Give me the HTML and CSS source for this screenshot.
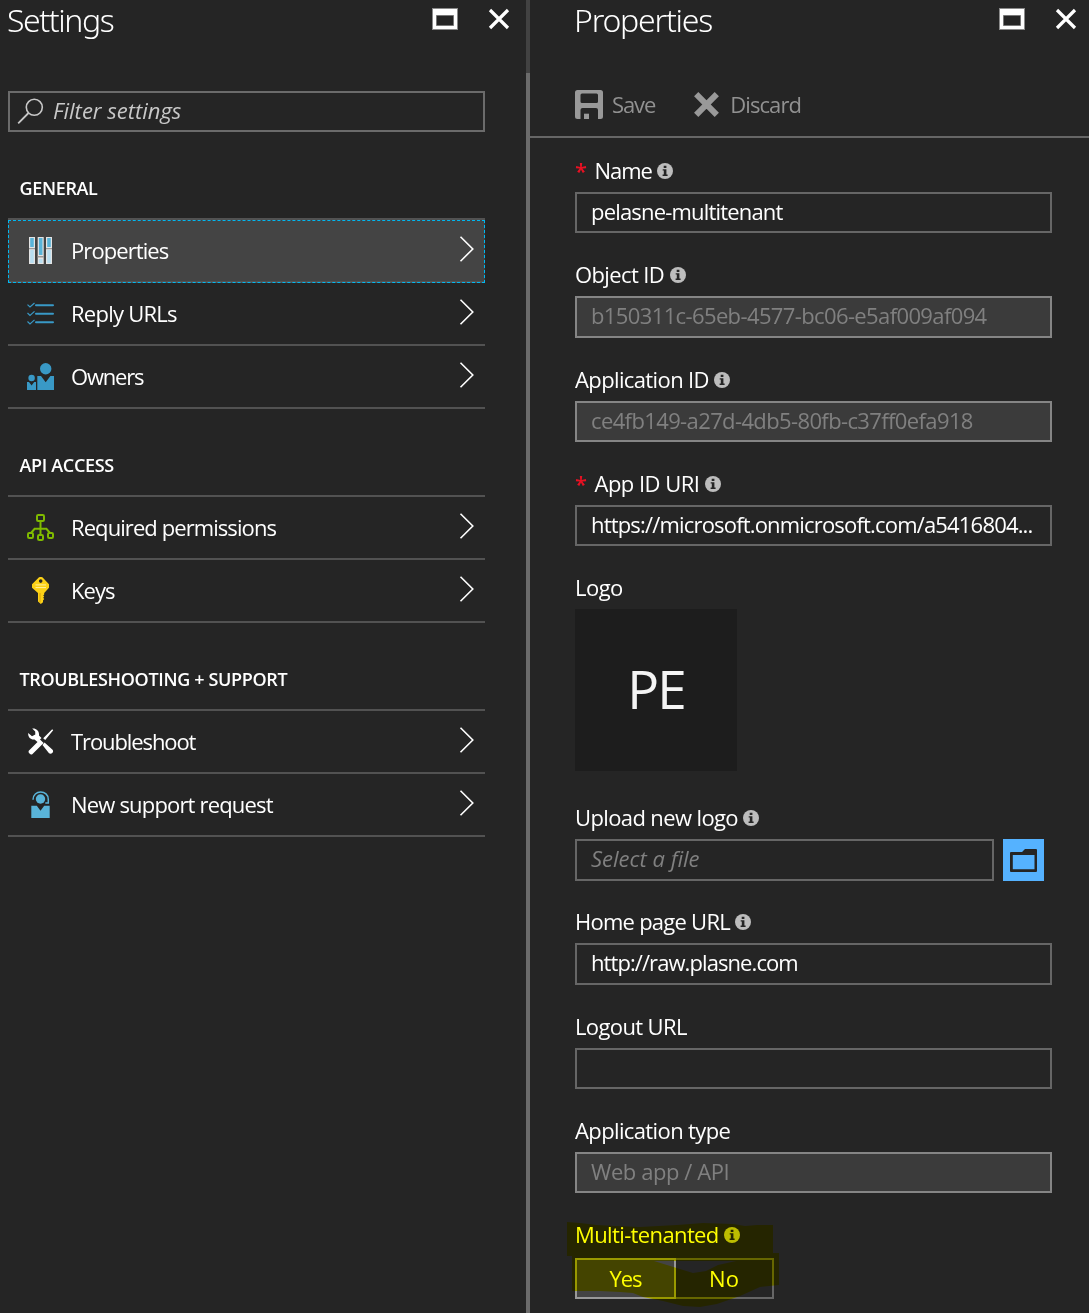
FILE: index.html
```html
<!DOCTYPE html>
<html lang="en">
<head>
<meta charset="utf-8">
<title>Settings - Properties</title>
<link rel="stylesheet" href="styles.css">
</head>
<body>
<svg class="defs" aria-hidden="true">
  <symbol id="window" viewBox="0 0 26 22"><path fill="#8a8a8a" d="M0 0h26v22H0z"/><path fill="#fff" d="M1 1h24v20H1z"/><path fill="#252525" stroke="#777" stroke-width="1" d="M4.500 7.500h17v10h-17z"/></symbol>
  <symbol id="close" viewBox="0 0 22 22"><path d="M2 2l18 18M20 2L2 20" stroke="#fff" stroke-width="3.200"/></symbol>
  <symbol id="chevron" viewBox="0 0 16 28"><path d="M1.500 1.800L13.800 14L1.500 26.200" fill="none" stroke="#fff" stroke-width="1.600"/></symbol>
  <symbol id="info" viewBox="0 0 16 16"><circle cx="8" cy="8" r="8" fill="#bdbdbd"/><path fill="#252525" d="M6.700 2.800h2.700v2.300H6.700zM5.700 6.300h3.700v5.300h1.200v1.300H5.600v-1.300h1.200V7.600H5.700z"/></symbol>
</svg>
<main class="blades">
  <section class="blade settings">
    <header class="blade-head">
      <h1 class="title title-settings">Settings</h1>
      <div class="controls"><svg class="i-window"><use href="#window"/></svg><svg class="i-close"><use href="#close"/></svg></div>
    </header>
    <div class="filter">
      <svg class="i-search" viewBox="0 0 27 27"><circle cx="17.300" cy="9.300" r="8" fill="none" stroke="#c8c8c8" stroke-width="1.600"/><path d="M11.500 15L1.200 25.300" stroke="#c8c8c8" stroke-width="1.800"/></svg>
      <span>Filter settings</span>
    </div>

    <h2 class="group">GENERAL</h2>
    <ul class="menu">
      <li class="item selected">
        <svg class="i-item" viewBox="0 0 27 27"><path fill="#e4e4e4" d="M2 0h6v27H2zM10.700 0h6v27h-6zM19 0h6v27h-6z"/><path fill="#59b4d9" d="M3.200 1h3.600v9H3.200zM11.900 1h3.600v17h-3.600zM20.200 1h3.600v9h-3.600z"/><path fill="#b8def0" d="M3.200 13h3.600v13H3.200zM11.900 22h3.600v4h-3.600zM20.200 13h3.600v13h-3.600z"/><path fill="#999" d="M2 11h6v1.300H2zM10.700 19h6v1.600h-6zM19 11h6v1.300h-6z"/></svg>
        <span class="k9">Properties</span><svg class="i-chevron"><use href="#chevron"/></svg>
      </li>
      <li class="item">
        <svg class="i-item" viewBox="0 0 27 27"><path stroke="#3999c6" stroke-width="2" stroke-linecap="round" d="M9 5.300h17M9 13.700h17M9 22.200h17"/><path fill="none" stroke="#3999c6" stroke-width="1.200" d="M.5 4.600L3 7l4.500-4M.5 13L3 15.400l4.500-4M.5 21.500L3 23.900l4.500-4"/></svg>
        <span class="k7">Reply URLs</span><svg class="i-chevron"><use href="#chevron"/></svg>
      </li>
      <li class="item">
        <svg class="i-item" viewBox="0 0 27 27"><g fill="#3999c6"><circle cx="18.700" cy="5.700" r="5.700"/><circle cx="4.600" cy="15" r="3.200"/><path d="M10.300 13H14l4.700 6.300 4.700-6.300H27v14H10.300zM0 19h2l2.600 3.400L7.200 19H9v8H0z"/></g></svg>
        <span class="k12">Owners</span><svg class="i-chevron"><use href="#chevron"/></svg>
      </li>
    </ul>

    <h2 class="group">API ACCESS</h2>
    <ul class="menu">
      <li class="item">
        <svg class="i-item" viewBox="0 0 27 27"><g fill="none" stroke="#7fba00" stroke-width="2"><rect x="10" y="1" width="7" height="6" rx="1.200"/><rect x="1" y="19" width="5" height="5" rx="1.200"/><rect x="11" y="21" width="5" height="5" rx="1.200"/><rect x="21" y="19" width="5" height="5" rx="1.200"/><path d="M13.500 7v14M4 19l3.600-4.200h11.800L23 19"/></g></svg>
        <span class="k9">Required permissions</span><svg class="i-chevron"><use href="#chevron"/></svg>
      </li>
      <li class="item">
        <svg class="i-item" viewBox="0 0 27 27"><path fill="#fcd116" fill-rule="evenodd" d="M12 .3Q13.700-.4 15.400.3L22 7.200v3.600L17.200 16v1.500l-1 1 1 1-1 1.200 1 1.200-1.200 1.600v1.800L13.800 27 11 24.600V16L5 10.800V7.200zM13.700 2.300a1.800 1.800 0 100 3.600 1.800 1.800 0 000-3.600z"/><path stroke="#fff1a0" stroke-width="1" d="M8.500 7.900h10.500M8.500 10.600h10.500"/><path stroke="#e0a90c" stroke-width="1.200" d="M13 16v9.500"/></svg>
        <span class="k9">Keys</span><svg class="i-chevron"><use href="#chevron"/></svg>
      </li>
    </ul>

    <h2 class="group">TROUBLESHOOTING + SUPPORT</h2>
    <ul class="menu">
      <li class="item">
        <svg class="i-item" viewBox="0 0 27 27"><path fill="#fff" d="M5.200.6C9 0 12.500 3 12 7.400L14.500 10 10.500 14 7.500 11.500C3.500 12 .8 9 1.200 5L5 8.200 8.300 6.600 8.200 3.600zM25.200 1.200l1 1.100-8 9.800-2-1.800zM13 11.500l3.600 3.400L5.300 26.200Q3.900 27.200 2.500 25.500 .9 23.900 2 22.500zM17.500 14.500L25.300 21.500Q26.800 23 25.500 24.800 23.800 26.500 22 25.300L15.500 17z"/></svg>
        <span class="k11">Troubleshoot</span><svg class="i-chevron"><use href="#chevron"/></svg>
      </li>
      <li class="item">
        <svg class="i-item" viewBox="0 0 27 27"><g fill="#59b4d9"><circle cx="13.500" cy="8" r="4.700"/><path d="M4.300 14.700h5.500l3.700 5 3.700-5h5.500V27H4.300z"/></g><path d="M6 8.800C5.800-1.500 21.500-1.500 21.300 8.500v3.600h-3" fill="none" stroke="#59b4d9" stroke-width="1.500"/></svg>
        <span class="k8">New support request</span><svg class="i-chevron"><use href="#chevron"/></svg>
      </li>
    </ul>
  </section>

  <div class="divider"></div>

  <section class="blade properties">
    <header class="blade-head">
      <h1 class="title">Properties</h1>
      <div class="controls"><svg class="i-window"><use href="#window"/></svg><svg class="i-close"><use href="#close"/></svg></div>
    </header>
    <div class="toolbar">
      <svg class="i-save" viewBox="0 0 28 29"><path fill="#999" fill-rule="evenodd" d="M2.500 0h23Q28 0 28 2.500V26.500Q28 29 25.500 29H23V20Q23 18 21 18H7.500Q5.500 18 5.500 20v9H2.500Q0 29 0 26.500V2.500Q0 0 2.500 0zM7 3.500Q5.500 3.500 5.500 5v6.500Q5.500 13 7 13H21.500Q23 13 23 11.500V5Q23 3.500 21.500 3.500z"/><path fill="#999" d="M9 23.700h5V29H9z"/></svg>
      <span class="k11">Save</span>
      <svg class="i-discard" viewBox="0 0 25 25"><path d="M2.200 2.200l20.600 20.600M22.800 2.200L2.200 22.800" stroke="#999" stroke-width="6"/></svg>
      <span class="k9">Discard</span>
    </div>
    <form class="form">
      <div class="field">
        <label class="label k10"><b class="req">*</b>Name<svg class="i-info"><use href="#info"/></svg></label>
        <div class="box k8">pelasne-multitenant</div>
      </div>
      <div class="field">
        <label class="label k6">Object ID<svg class="i-info"><use href="#info"/></svg></label>
        <div class="box disabled k6">b150311c-65eb-4577-bc06-e5af009af094</div>
      </div>
      <div class="field">
        <label class="label k6">Application ID<svg class="i-info"><use href="#info"/></svg></label>
        <div class="box disabled k6">ce4fb149-a27d-4db5-80fb-c37ff0efa918</div>
      </div>
      <div class="field">
        <label class="label k5"><b class="req">*</b>App ID URI<svg class="i-info"><use href="#info"/></svg></label>
        <div class="box k8">https://microsoft.onmicrosoft.com/a5416804...</div>
      </div>
      <div class="field logo-field">
        <label class="label k5">Logo</label>
        <div class="logo">PE</div>
      </div>
      <div class="field">
        <label class="label k6">Upload new logo<svg class="i-info"><use href="#info"/></svg></label>
        <div class="upload">
          <div class="box placeholder">Select a file</div>
          <button class="browse" type="button" aria-label="Browse"><svg viewBox="0 0 27 23"><path fill="#252525" fill-rule="evenodd" d="M0 4Q0 3 1 3H12L15 0H26Q27 0 27 1V22Q27 23 26 23H1Q0 23 0 22zM2.800 6V20.300H24.500V6z"/></svg></button>
        </div>
      </div>
      <div class="field">
        <label class="label k7">Home page URL<svg class="i-info"><use href="#info"/></svg></label>
        <div class="box k9">http://raw.plasne.com</div>
      </div>
      <div class="field">
        <label class="label k6">Logout URL</label>
        <div class="box"></div>
      </div>
      <div class="field">
        <label class="label k6">Application type</label>
        <div class="box disabled k4">Web app / API</div>
      </div>
      <div class="field marked">
        <label class="label k6">Multi-tenanted<svg class="i-info"><use href="#info"/></svg></label>
        <div class="toggle"><span class="on k11">Yes</span><span>No</span></div>
        <svg class="marker" viewBox="0 0 220 98"><path fill="#ff0" fill-rule="evenodd" d="M2 7L15 8 32 10 50 11 75 12 112 10 138 8 168 9 180 11 192 10 208 10V38H214V70L195 72 175 81 152 89 135 92 118 91 98 86 78 82 68 78 55 77 35 76H7V41H2zM89 46L128 58 141 56 153 50 171 46z"/></svg>
      </div>
    </form>
  </section>
</main>
</body>
</html>
```
FILE: styles.css
```css
* { box-sizing: border-box; }
body {
  margin: 0;
  background: #252525;
  color: #fff;
  font: 22px/30px "Open Sans", "Noto Sans", sans-serif;
}
.defs { display: none; }
svg { display: block; flex: none; }

.blades { display: flex; height: 1313px; overflow: hidden; }
.settings { width: 526px; padding: 0 41px 0 8px; }
.properties { flex: 1; }
.divider { width: 4px; background: linear-gradient(#424242 73px, #6b6b6b 73px); }

/* Blade header */
.blade-head { display: flex; justify-content: space-between; height: 39px; }
.title {
  margin: 0;
  font: 300 32px/40px "Noto Sans", sans-serif;
  letter-spacing: -1.2px;
}
.title-settings { margin-left: -1px; letter-spacing: -1.4px; }
.controls { display: flex; gap: 30px; align-items: flex-start; padding-top: 8px; }
.settings .controls { margin-right: -25px; }
.properties .blade-head { padding: 0 12px 0 44px; }
.i-window { width: 26px; height: 22px; }
.i-close { width: 22px; height: 22px; }

/* Letter fitting, in tenths of a pixel */
.k4 { letter-spacing: -.42px; }
.k5 { letter-spacing: -.52px; }
.k6 { letter-spacing: -.62px; }
.k7 { letter-spacing: -.75px; }
.k8 { letter-spacing: -.82px; }
.k9 { letter-spacing: -.92px; }
.k10 { letter-spacing: -1.05px; }
.k11 { letter-spacing: -1.1px; }
.k12 { letter-spacing: -1.2px; }

/* Settings menu */
.filter {
  display: flex;
  align-items: center;
  gap: 9px;
  height: 41px;
  margin-top: 52px;
  padding: 0 0 1px 7px;
  border: 2px solid #6b6b6b;
  color: #c8c8c8;
  font-style: italic;
}
.filter span { padding-bottom: 2px; }
.i-search { width: 27px; height: 27px; }
.group {
  margin: 0;
  padding: 44px 0 18px 11.5px;
  font-size: 18px;
  font-weight: 600;
  line-height: 24px;
  letter-spacing: -.34px;
}
.menu { margin: 0; padding: 0; list-style: none; border-top: 2px solid #525252; }
.item {
  display: flex;
  align-items: center;
  height: 63px;
  padding: 0 10px 0 19px;
  border-bottom: 2px solid #525252;
}
.item span { flex: 1; margin-left: 17px; padding-bottom: 1px; }
.selected { background: #444; outline: 1px dashed #00b7f1; outline-offset: -1px; }
.i-item { width: 27px; height: 27px; }
.i-chevron { width: 16px; height: 28px; margin-bottom: 3px; }

/* Toolbar */
.toolbar {
  display: flex;
  align-items: center;
  height: 99px;
  padding: 34px 0 0 45px;
  border-bottom: 2px solid #666;
  color: #919191;
}
.toolbar span { padding-bottom: 2px; }
.i-save { width: 28px; height: 29px; margin-right: 9px; }
.i-discard { width: 25px; height: 25px; margin: 0 11px 0 39px; }

/* Form */
.form { padding: 17px 0 0 45px; }
.field { height: 104.25px; }
.label { display: flex; align-items: center; height: 37px; padding-bottom: 6.8px; }
.req { width: 19.5px; color: #e81123; font-weight: 600; }
.i-info { width: 16px; height: 16px; margin: 2px 0 0 5.5px; }
.box {
  width: 477px;
  height: 41.4px;
  padding: 1px 14px 0;
  border: 2px solid #666;
  line-height: 32px;
  white-space: nowrap;
}
.disabled { background: #3b3b3b; border-color: #858585; color: #808080; }
.placeholder { width: 419px; height: 42px; color: #808080; font-style: italic; }
.logo-field { height: 230px; }
.logo {
  display: grid;
  place-items: center;
  width: 162px;
  height: 162px;
  padding-bottom: 3px;
  background: #1d1d1d;
  color: #f4f4f4;
  font-size: 53px;
  letter-spacing: -2px;
}
.upload { display: flex; gap: 9px; }
.browse {
  display: grid;
  place-items: center;
  width: 41px;
  height: 42px;
  padding: 0;
  border: 0;
  background: #55b2ff;
}
.browse svg { width: 27px; height: 23px; }
.marked { position: relative; }
.toggle { display: flex; width: 199px; height: 41px; margin-top: 2px; border: 2px solid #666; }
.toggle span { flex: 1; text-align: center; line-height: 36px; }
.toggle .on { flex: none; width: 101px; margin: -2px 0 -2px -2px; border: 2px solid #999; background: #444; }
.marker {
  position: absolute;
  left: -10px;
  top: -4px;
  width: 220px;
  height: 98px;
  mix-blend-mode: multiply;
}
```
